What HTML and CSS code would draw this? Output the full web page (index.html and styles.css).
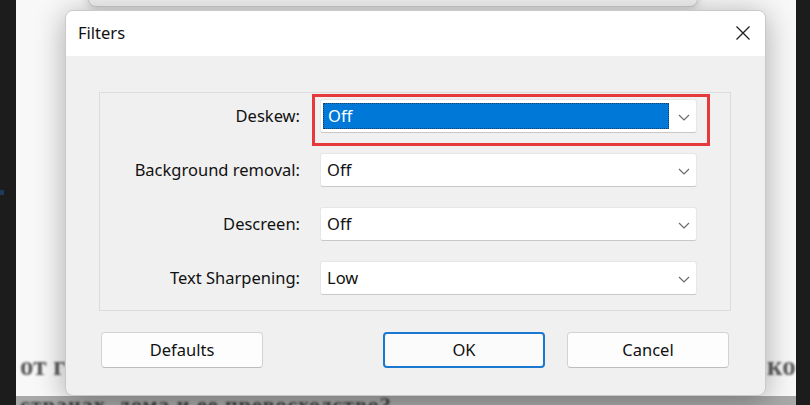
FILE: index.html
```html
<!DOCTYPE html>
<html lang="en">
<head>
<meta charset="utf-8">
<title>Filters</title>
<link rel="stylesheet" href="styles.css">
</head>
<body>
<div class="screen">
  <div class="side side-left"><span class="side-dot"></span></div>
  <div class="page">
    <div class="back-window"></div>
    <p class="page-text page-text-left">от г</p>
    <p class="page-text page-text-right">ко</p>
    <div class="page-bottom"><span>странах, дома и ее превосходство?</span></div>

    <div class="dialog">
      <div class="titlebar">
        <span class="title">Filters</span>
        <svg class="close" width="16" height="16" viewBox="0 0 16 16"><path d="M1.5 1.5 L14.5 14.5 M14.5 1.5 L1.5 14.5" stroke="#1f1f1f" stroke-width="1.3" fill="none"/></svg>
      </div>
      <div class="dialog-body">
        <div class="group">
          <label class="label">Deskew:</label>
          <div class="select focused">
            <span class="focus-ring"></span>
            <span class="value selected">Off</span>
            <svg class="chev" width="12" height="7" viewBox="0 0 12 7"><path d="M1 1 L6 6 L11 1" stroke="#6b6b6b" stroke-width="1.2" fill="none"/></svg>
          </div>
          <label class="label">Background removal:</label>
          <div class="select">
            <span class="value">Off</span>
            <svg class="chev" width="12" height="7" viewBox="0 0 12 7"><path d="M1 1 L6 6 L11 1" stroke="#6b6b6b" stroke-width="1.2" fill="none"/></svg>
          </div>
          <label class="label">Descreen:</label>
          <div class="select">
            <span class="value">Off</span>
            <svg class="chev" width="12" height="7" viewBox="0 0 12 7"><path d="M1 1 L6 6 L11 1" stroke="#6b6b6b" stroke-width="1.2" fill="none"/></svg>
          </div>
          <label class="label">Text Sharpening:</label>
          <div class="select">
            <span class="value">Low</span>
            <svg class="chev" width="12" height="7" viewBox="0 0 12 7"><path d="M1 1 L6 6 L11 1" stroke="#6b6b6b" stroke-width="1.2" fill="none"/></svg>
          </div>
        </div>
        <div class="buttons">
          <button class="btn">Defaults</button>
          <button class="btn btn-ok">OK</button>
          <button class="btn">Cancel</button>
        </div>
      </div>
    </div>
  </div>
  <div class="side side-right"></div>
</div>
</body>
</html>
```

FILE: styles.css
```css
* { box-sizing: border-box; }
html, body { margin: 0; padding: 0; }
body {
  width: 810px;
  height: 405px;
  overflow: hidden;
  font-family: "Noto Sans", "Open Sans", sans-serif;
  font-size: 16.5px;
  color: #111;
}
.screen {
  display: flex;
  width: 810px;
  height: 405px;
}
.side {
  background: #1c1c1c;
  height: 100%;
}
.side-left { width: 16px; position: relative; }
.side-right { width: 14px; }
.side-dot {
  position: absolute;
  left: 0;
  top: 190px;
  width: 4px;
  height: 5px;
  background: #1d3a5a;
}
.page {
  flex: 1;
  position: relative;
  background: #f8f8f8;
  overflow: hidden;
}
.back-window {
  position: absolute;
  left: 72px;
  top: -20px;
  width: 610px;
  height: 27px;
  background: #f3f3f3;
  border: 1px solid #cfcfcf;
  border-radius: 8px;
  box-shadow: 0 2px 8px rgba(0,0,0,0.18);
}
.page-text {
  position: absolute;
  margin: 0;
  font-family: "Liberation Serif", serif;
  font-weight: bold;
  font-size: 27px;
  color: #5a5a5a;
  filter: blur(1px);
}
.page-text-left { left: 4px; top: 351px; }
.page-text-right { left: 751px; top: 351px; }
.page-bottom {
  position: absolute;
  left: 0;
  right: 0;
  top: 396px;
  height: 12px;
  background: #a8a8a8;
  overflow: hidden;
}
.page-bottom span {
  position: absolute;
  left: 4px;
  top: -4px;
  font-family: "Liberation Serif", serif;
  font-weight: bold;
  font-size: 22px;
  color: #3a3a3a;
  filter: blur(1px);
  white-space: nowrap;
  letter-spacing: 1px;
}
.dialog {
  position: absolute;
  left: 49px;
  top: 10px;
  width: 701px;
  height: 386px;
  background: #f0f0f0;
  border: 1px solid #c9c9c9;
  border-radius: 8px;
  box-shadow: 0 4px 30px rgba(0,0,0,0.32);
  overflow: hidden;
  display: flex;
  flex-direction: column;
}
.titlebar {
  height: 45px;
  background: #ffffff;
  display: flex;
  align-items: center;
  justify-content: space-between;
  padding: 0 14px 0 12px;
  flex-shrink: 0;
}
.title { font-size: 16.5px; color: #111; margin-top: -2px; }
.close { margin-top: -2px; }
.dialog-body {
  padding: 36px 0 0 33px;
}
.group {
  width: 632px;
  height: 219px;
  border: 1px solid #dcdcdc;
  display: grid;
  grid-template-columns: 200px 377px;
  grid-auto-rows: 34px;
  column-gap: 20px;
  row-gap: 20px;
  padding-top: 6px;
  align-items: center;
}
.label {
  text-align: right;
  color: #111;
  font-size: 16.5px;
  margin-top: -2px;
}
.select {
  position: relative;
  height: 34px;
  background: #ffffff;
  border: 1px solid #e6e6e6;
  border-bottom-color: #c8c8c8;
  border-radius: 3px;
  display: flex;
  align-items: center;
  padding-left: 6px;
}
.value { font-size: 16.5px; color: #111; margin-top: -2px; }
.value.selected {
  position: absolute;
  left: 2px;
  top: 3px;
  width: 346px;
  height: 26px;
  margin-top: 0;
  background: #0078d7;
  color: #ffffff;
  padding-left: 4px;
  line-height: 23px;
  border: 1px dotted #1a3d66;
}
.chev {
  position: absolute;
  right: 6px;
  top: 14px;
}
.focus-ring {
  position: absolute;
  left: -9px;
  top: -6px;
  width: 398px;
  height: 52px;
  border: 3px solid #e5393b;
  pointer-events: none;
}
.buttons {
  display: flex;
  margin-top: 21px;
  margin-left: 2px;
  width: 628px;
}
.btn {
  width: 162px;
  height: 36px;
  background: #fdfdfd;
  border: 1px solid #d2d2d2;
  border-bottom-color: #bdbdbd;
  border-radius: 4px;
  font-family: "Noto Sans", "Open Sans", sans-serif;
  font-size: 16.5px;
  color: #111;
  padding: 0 0 2px;
}
.btn-ok {
  margin-left: auto;
  margin-right: 22px;
  border: 2px solid #1b78d0;
  background: #fbfbfb;
}
```
